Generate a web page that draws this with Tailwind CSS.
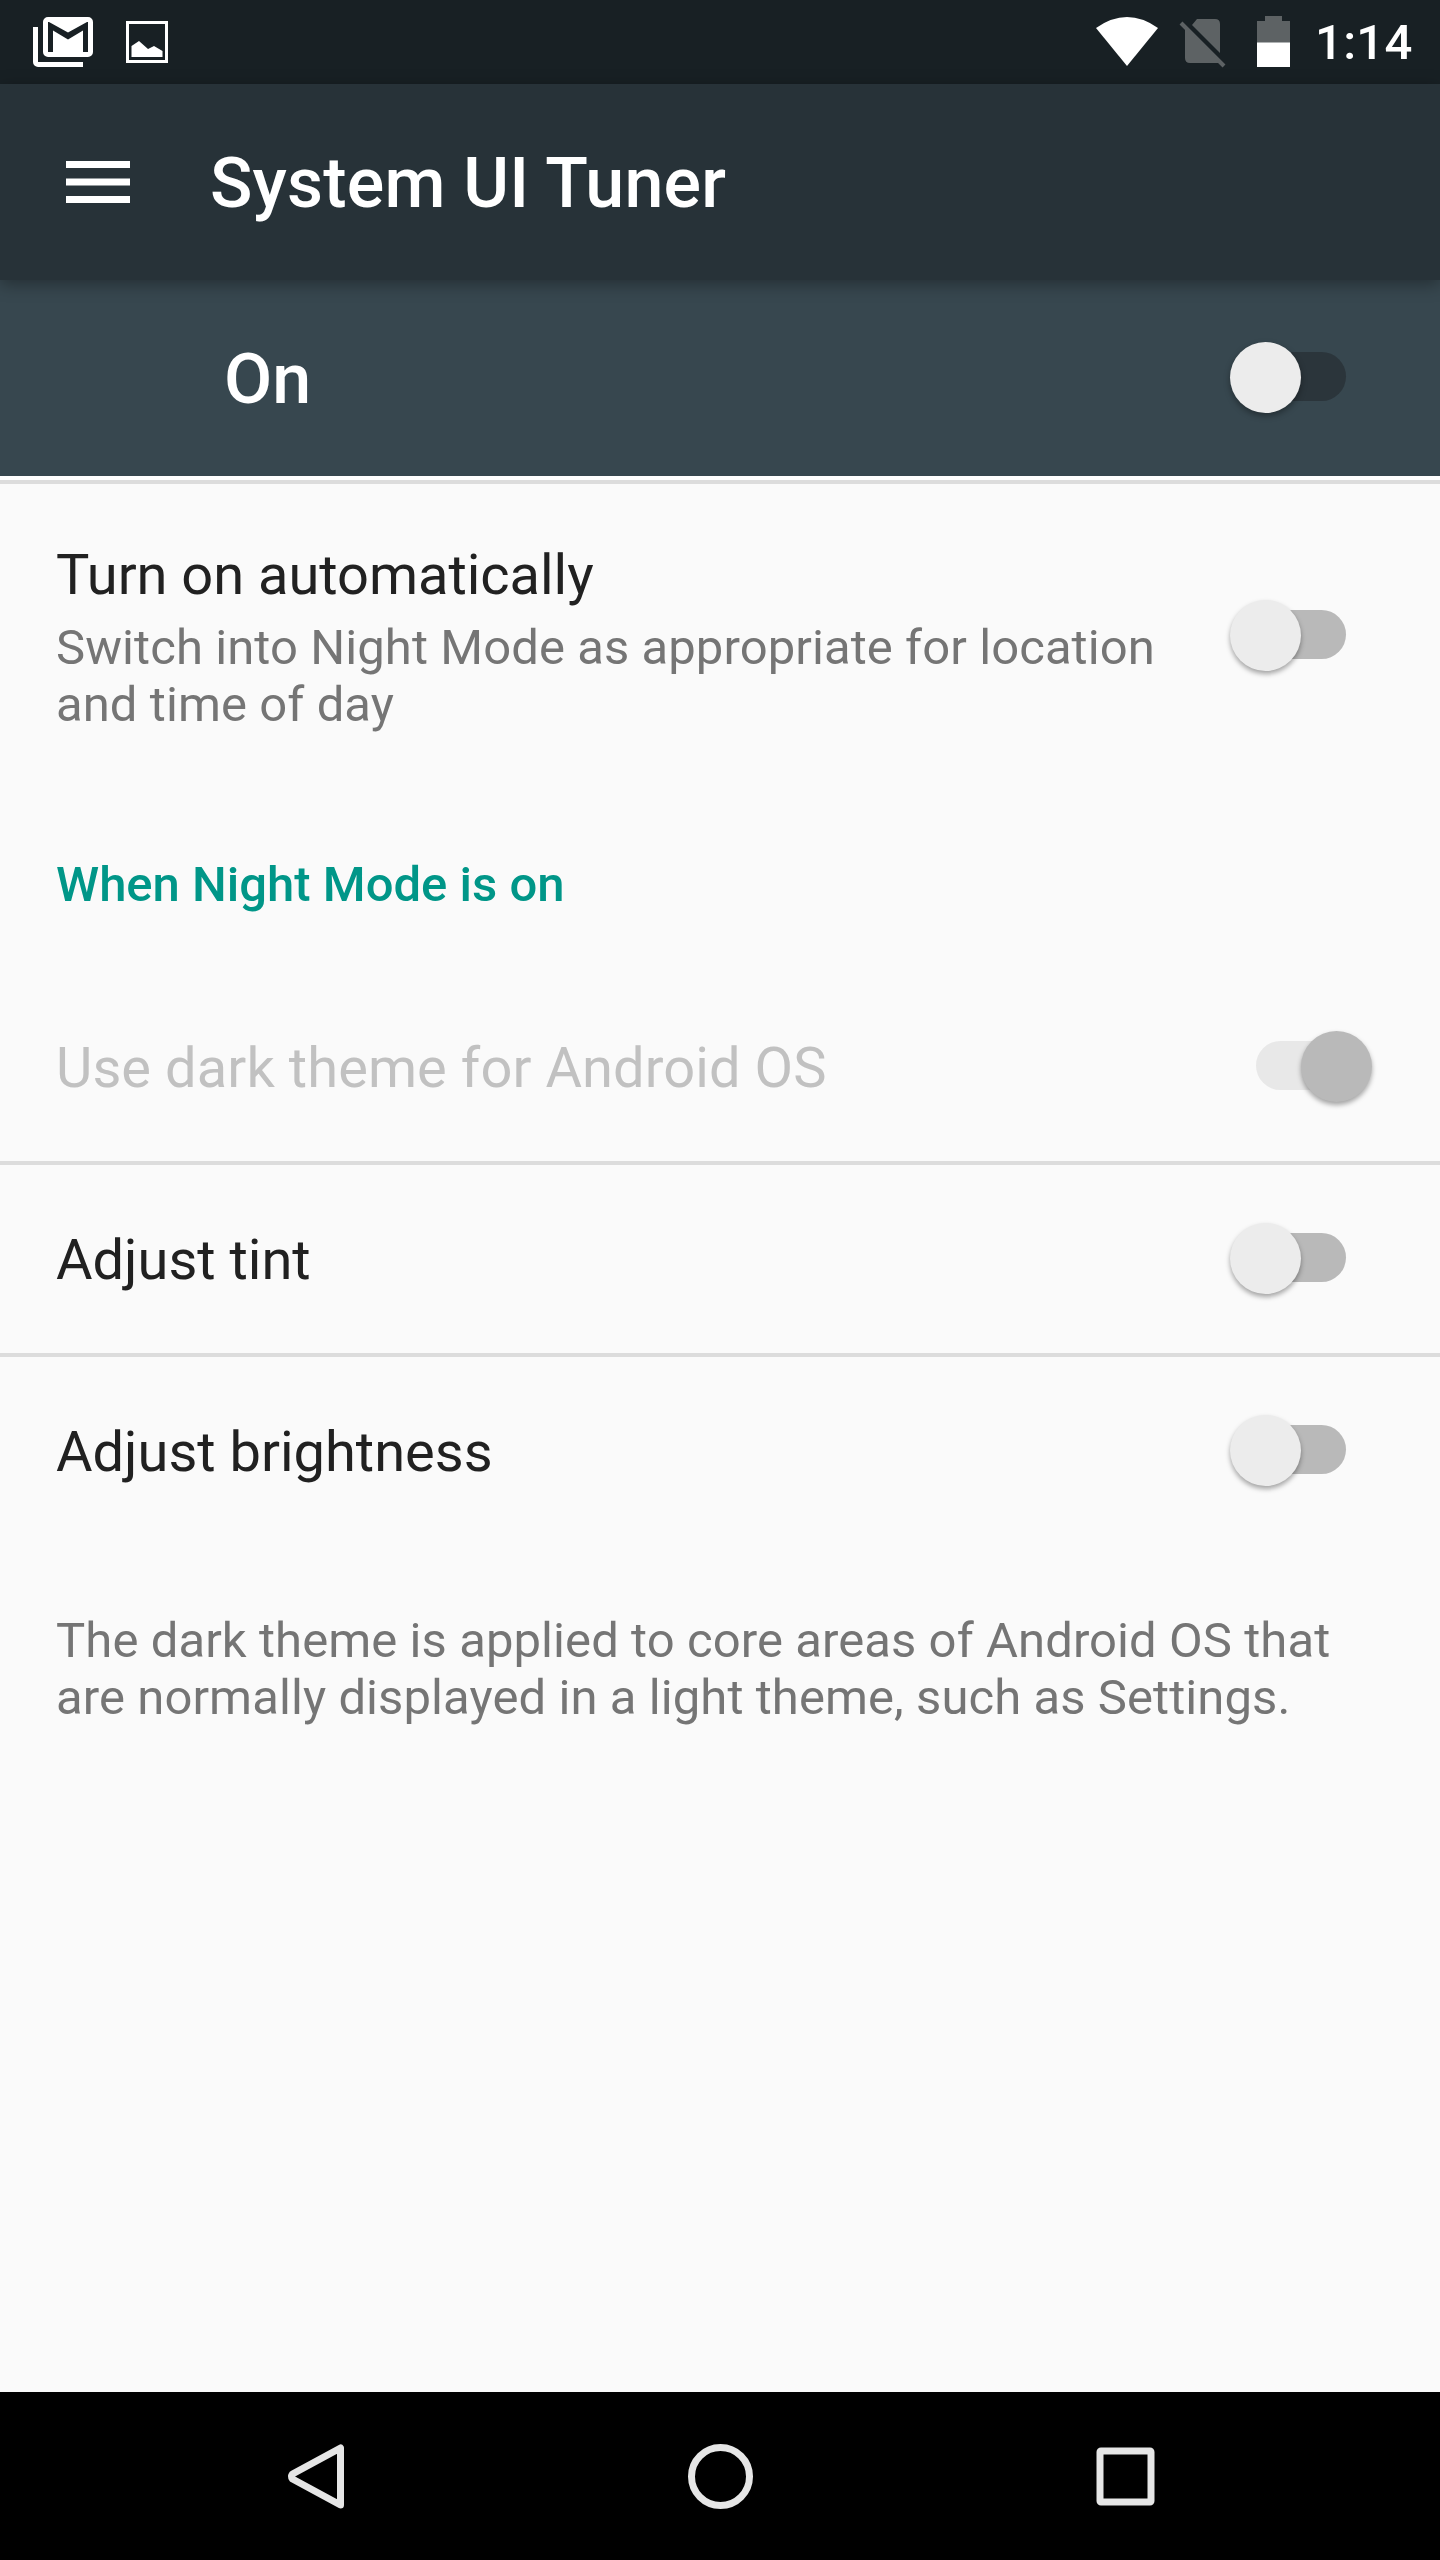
<!DOCTYPE html>
<html lang="en">
<head>
  <meta charset="UTF-8" />
  <meta name="viewport" content="width=device-width, initial-scale=1.0"/>
  <title>System UI Tuner</title>
  <script src="https://cdn.jsdelivr.net/npm/@tailwindcss/browser@4"></script>
</head>
<body class="bg-[#fafafa] font-[Roboto,sans-serif] w-[1440px] h-[2560px] flex flex-col overflow-hidden">

  <!-- Status bar -->
  <div class="h-[84px] shrink-0 bg-[#182024] flex items-center justify-between text-white">
    <svg class="w-[240px] h-[84px]" viewBox="0 0 240 84">
      <path fill="#fff" d="M33 27h5v35h45v5H38a5 5 0 0 1-5-5z"/>
      <path fill="#fff" fill-rule="evenodd" d="M48 17h40a5 5 0 0 1 5 5v30a5 5 0 0 1-5 5H48a5 5 0 0 1-5-5V22a5 5 0 0 1 5-5zM48 22v30h5V30.500l15 9 15-9V52h5V22h-1L68 32.500 49 22z"/>
      <rect x="127.500" y="22.500" width="39" height="39" fill="none" stroke="#fff" stroke-width="3"/>
      <path fill="#fff" d="M131.500 46l7.500-5 9 8 6-3 8.500 5v6h-31z"/>
    </svg>
    <div class="flex items-center">
      <svg class="w-[230px] h-[84px]" viewBox="1070 0 230 84">
        <path fill="#fff" d="M1096 28Q1127 6 1158 28L1127 66z"/>
        <path fill="#5d6264" d="M1197 19h18q5 0 5 5v29l-28-28zM1185 29l34 34h-29q-5 0-5-5z"/>
        <path stroke="#5d6264" stroke-width="4" d="M1181 23l43 43"/>
        <path fill="#5d6264" d="M1265 16h17v5h8v22h-33V21h8z"/>
        <path fill="#fff" d="M1257 42.500h33V67h-33z"/>
      </svg>
      <span class="w-[140px] pl-[15px] pt-px text-[49px] leading-[84px] tracking-[0.3px] font-medium">1:14</span>
    </div>
  </div>

  <!-- Toolbar -->
  <header class="relative h-[196px] shrink-0 bg-[#273238] flex items-center pl-[66px] text-white shadow-[0_4px_16px_rgba(0,0,0,0.35)]">
    <svg class="w-[64px] h-[42px]" viewBox="0 0 64 42" fill="#fff">
      <path d="M0 0h64v7H0zM0 17.500h64v7H0zM0 35h64v7H0z"/>
    </svg>
    <h1 class="pl-[80px] pt-[2px] text-[70px] leading-[82px] tracking-[0.2px] font-medium">System UI Tuner</h1>
  </header>

  <!-- Master switch -->
  <div class="h-[196px] shrink-0 bg-[#37474f] flex items-center justify-between pl-[224px] pr-[68px]">
    <span class="pt-[2px] text-[70px] leading-[82px] font-medium text-white">On</span>
    <div class="relative w-[142px] h-[72px]">
      <div class="absolute left-[26px] top-[10px] w-[90px] h-[49px] rounded-full bg-[#2b353b]"></div>
      <div class="absolute left-0 top-0 size-[71px] rounded-full bg-[#ececec] shadow-[0_3px_6px_rgba(0,0,0,0.35)]"></div>
    </div>
  </div>
  <div class="h-[8px] shrink-0 bg-white border-b-4 border-[#dcdcdc]"></div>

  <!-- Preferences -->
  <main class="grow text-[#212121]">
    <div class="h-[304px] pt-[58px] flex items-start justify-between pl-[56px] pr-[68px]">
      <div>
        <h2 class="text-[56px] leading-[66px] tracking-[-0.03px]">Turn on automatically</h2>
        <p class="pt-[11px] text-[49px] leading-[57px] tracking-[0.08px] text-[#757575]">Switch into Night Mode as appropriate for location<br>and time of day</p>
      </div>
      <div class="relative w-[142px] h-[72px] mt-[58px] shrink-0">
        <div class="absolute left-[26px] top-[10px] w-[90px] h-[49px] rounded-full bg-[#b9b9b9]"></div>
        <div class="absolute left-0 top-0 size-[71px] rounded-full bg-[#ececec] shadow-[0_3px_5px_rgba(0,0,0,0.35)]"></div>
      </div>
    </div>

    <h3 class="h-[185px] pt-[68px] pl-[56px] text-[49px] leading-[57px] font-medium text-[#009688]">When Night Mode is on</h3>

    <div class="h-[192px] flex items-center justify-between pl-[56px] pr-[68px] border-b-4 border-[#dcdcdc]">
      <h2 class="pt-[2px] text-[56px] leading-[66px] tracking-[0.08px] text-[#c1c1c1]">Use dark theme for Android OS</h2>
      <div class="relative w-[142px] h-[72px]">
        <div class="absolute left-[26px] top-[10px] w-[90px] h-[49px] rounded-full bg-[#e8e8e8]"></div>
        <div class="absolute right-0 top-0 size-[71px] rounded-full bg-[#b9b9b9] shadow-[0_3px_5px_rgba(0,0,0,0.35)]"></div>
      </div>
    </div>

    <div class="h-[192px] flex items-center justify-between pl-[56px] pr-[68px] border-b-4 border-[#dcdcdc]">
      <h2 class="pt-[2px] text-[56px] leading-[66px]">Adjust tint</h2>
      <div class="relative w-[142px] h-[72px]">
        <div class="absolute left-[26px] top-[10px] w-[90px] h-[49px] rounded-full bg-[#b9b9b9]"></div>
        <div class="absolute left-0 top-0 size-[71px] rounded-full bg-[#ececec] shadow-[0_3px_5px_rgba(0,0,0,0.35)]"></div>
      </div>
    </div>

    <div class="h-[188px] flex items-center justify-between pl-[56px] pr-[68px]">
      <h2 class="pt-[2px] text-[56px] leading-[66px]">Adjust brightness</h2>
      <div class="relative w-[142px] h-[72px]">
        <div class="absolute left-[26px] top-[10px] w-[90px] h-[49px] rounded-full bg-[#b9b9b9]"></div>
        <div class="absolute left-0 top-0 size-[71px] rounded-full bg-[#ececec] shadow-[0_3px_5px_rgba(0,0,0,0.35)]"></div>
      </div>
    </div>

    <p class="pt-[67px] pl-[56px] text-[49px] leading-[57px] tracking-[0.08px] text-[#757575]">The dark theme is applied to core areas of Android OS that<br>are normally displayed in a light theme, such as Settings.</p>
  </main>

  <!-- Navigation bar -->
  <nav class="h-[168px] shrink-0 bg-black">
    <svg class="w-full h-[168px]" viewBox="0 2392 1440 168" fill="none" stroke="#e6e6e6" stroke-width="7" stroke-linejoin="round">
      <path d="M340.500 2448v57L292.500 2479q-2-2.500 0-5z"/>
      <circle cx="720.500" cy="2476.500" r="29"/>
      <rect x="1100" y="2451" width="51" height="51" rx="1"/>
    </svg>
  </nav>

</body>
</html>
